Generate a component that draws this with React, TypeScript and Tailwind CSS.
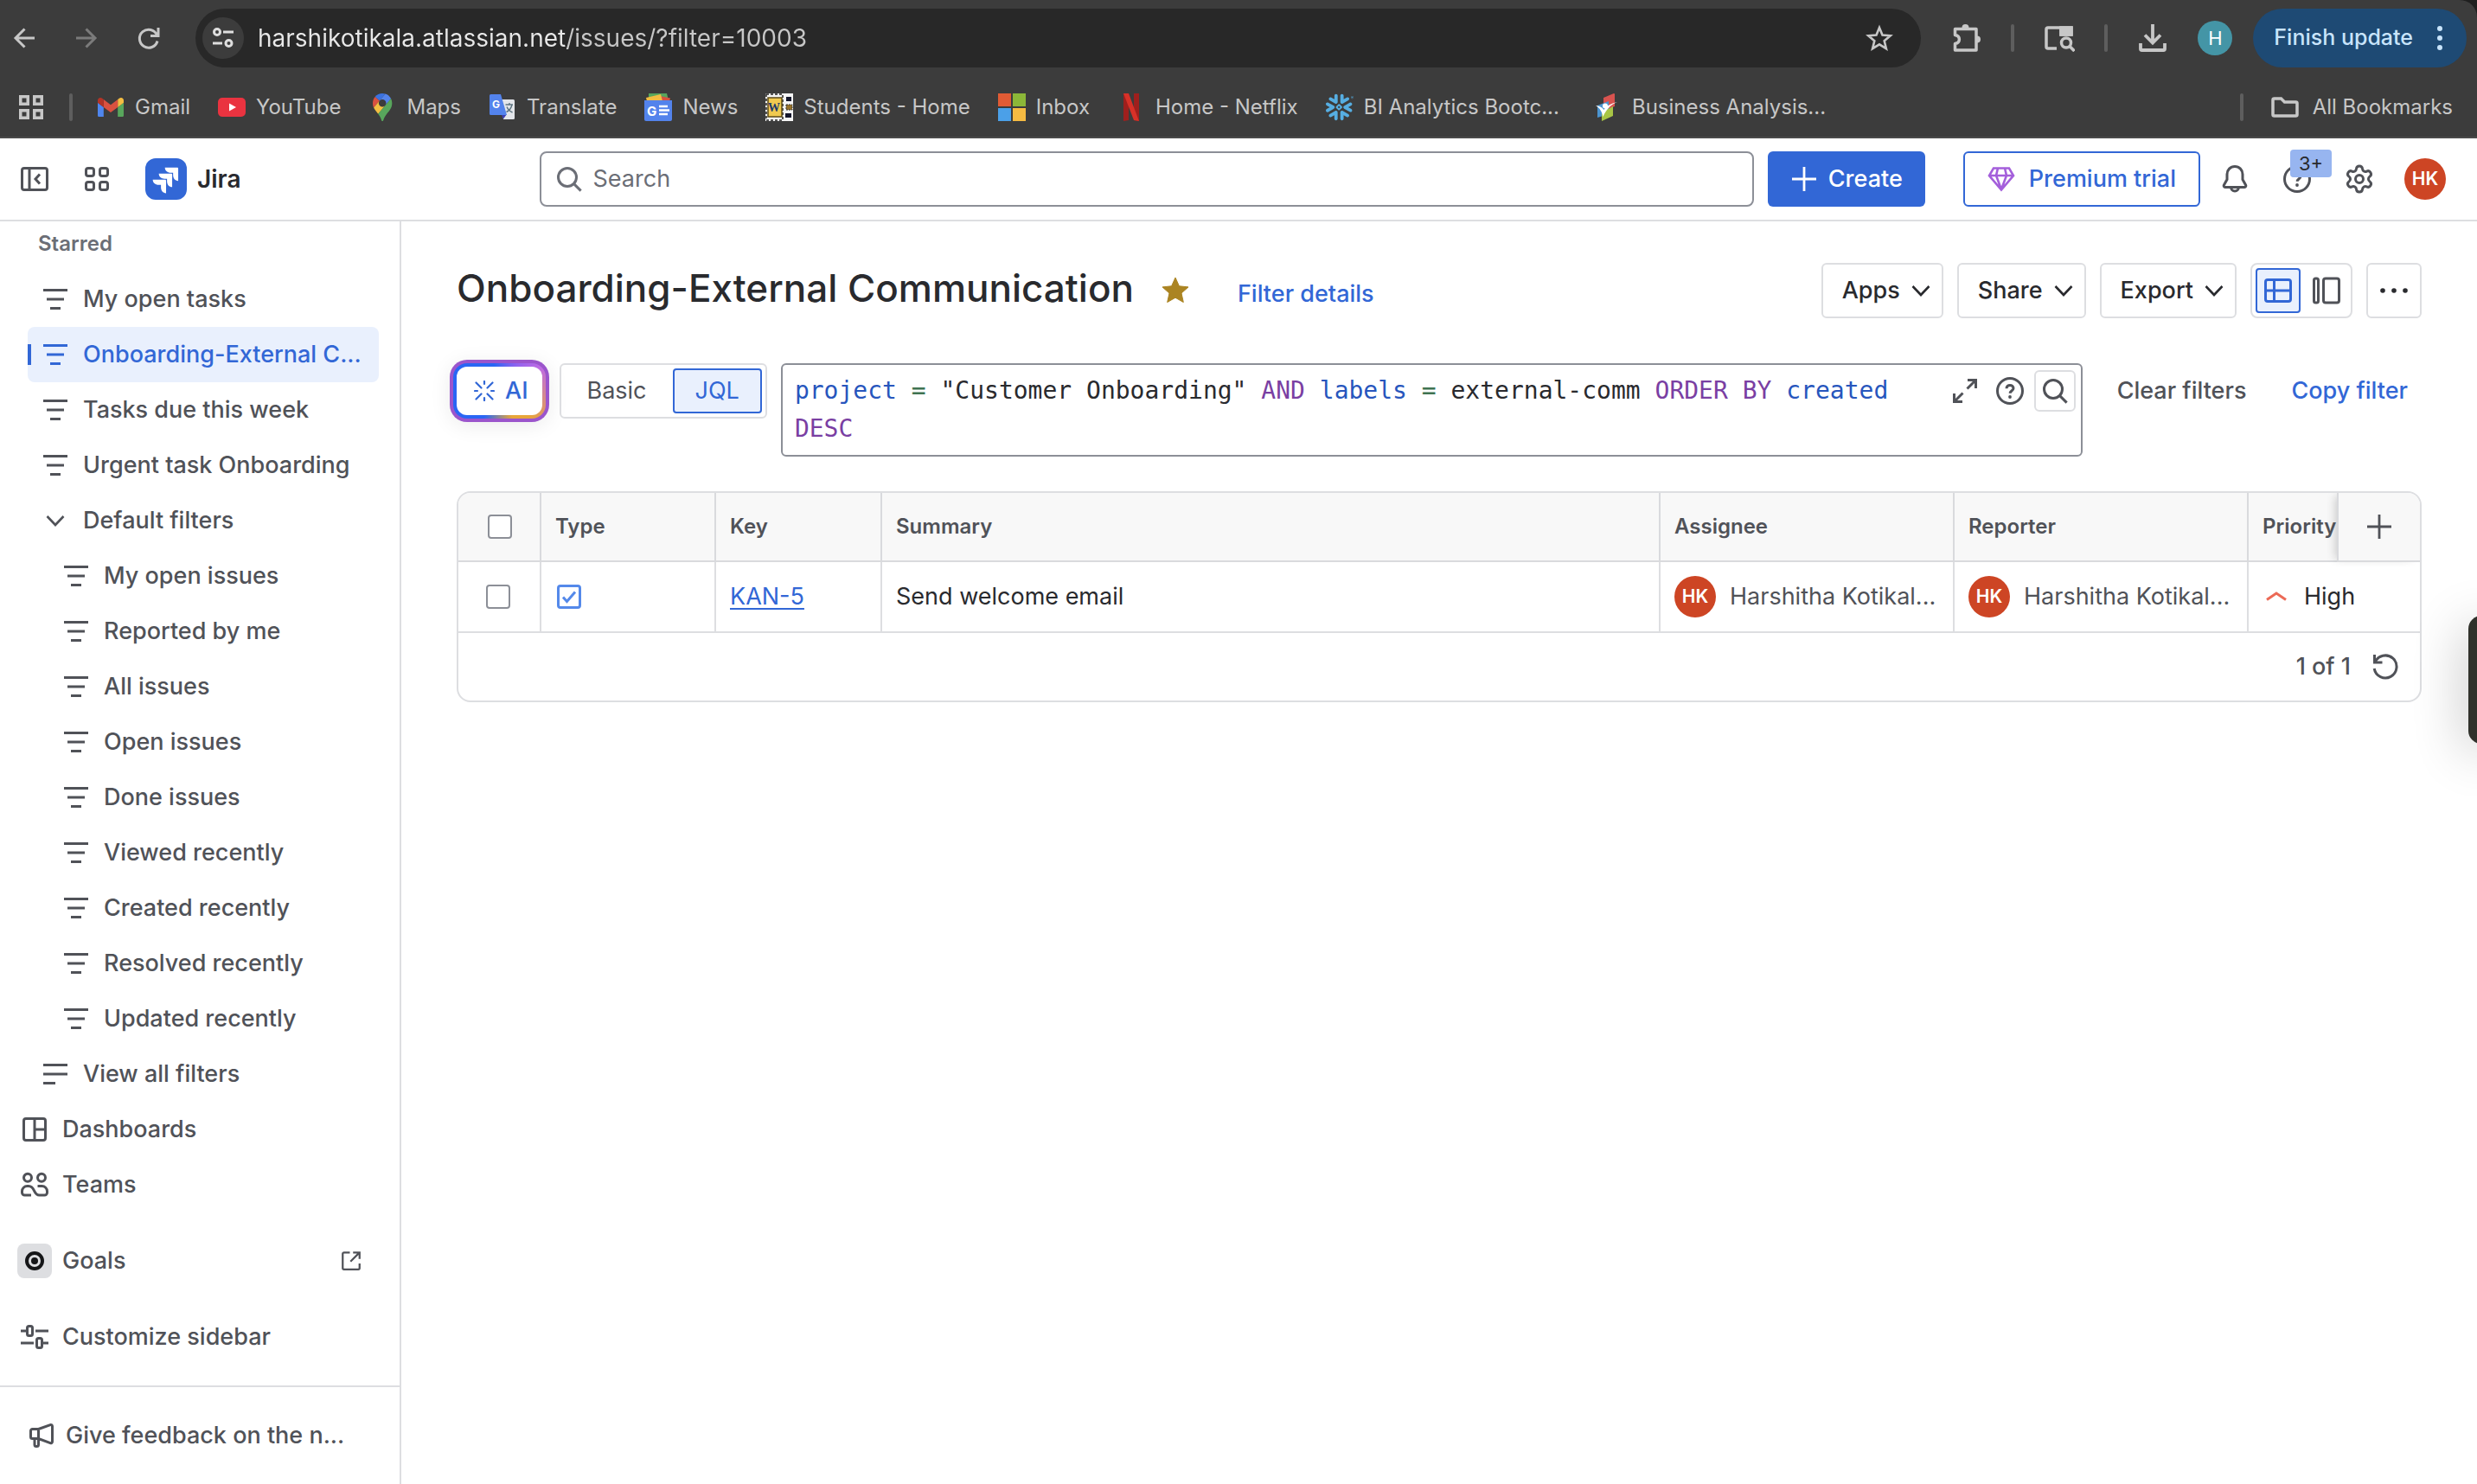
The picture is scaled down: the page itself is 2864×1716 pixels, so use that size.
import React from "react";
import { Settings } from "lucide-react";
import { SiSnowflake } from "react-icons/si";

type Kids = { children: React.ReactNode; className?: string };

/* 16-unit outlined icon, drawn at 32px unless a size class is given */
function Icon({ children, className = "size-8" }: Kids) {
  return (
    <svg viewBox="0 0 16 16" fill="none" stroke="currentColor" strokeWidth="1.5" aria-hidden="true" className={"shrink-0 " + className}>
      {children}
    </svg>
  );
}

const FilterIcon = () => <Icon><path d="M1 2.75h14M3 8h10M5 13.25h6" /></Icon>;
const LinesIcon = () => <Icon><path d="M1 2.75h14M1 8h14M1 13.25h7" /></Icon>;
const ChevronDown = ({ className = "size-8" }: { className?: string }) => (
  <Icon className={className}><path d="m3.25 5.5 4.75 5 4.75-5" strokeWidth="1.3" /></Icon>
);
const SearchIcon = ({ className = "size-8" }: { className?: string }) => (
  <Icon className={className}><circle cx="7" cy="7" r="5.25" /><path d="m10.8 10.8 4 4" /></Icon>
);
const HelpIcon = () => (
  <Icon>
    <circle cx="8" cy="8" r="7.25" />
    <path d="M6 6.6c0-1.2.9-1.9 2-1.9s2 .7 2 1.8c0 1.3-1.9 1.5-1.9 2.9" />
    <circle cx="8" cy="11.5" r=".95" fill="currentColor" stroke="none" />
  </Icon>
);
const PlusIcon = () => <Icon><path d="M8 1v14M1 8h14" strokeWidth="1.4" /></Icon>;

/* ---------- Browser chrome ---------- */

const GmailIcon = () => (
  <svg viewBox="52 42 88 66" className="w-[30px]">
    <path fill="#4f86ee" d="M58 108h14V74L52 59v43c0 3.32 2.69 6 6 6" />
    <path fill="#58a65c" d="M120 108h14c3.32 0 6-2.69 6-6V59l-20 15" />
    <path fill="#f3bd42" d="M120 48v26l20-15v-8c0-7.42-8.47-11.65-14.4-7.2" />
    <path fill="#d95140" d="M72 74V48l24 18 24-18v26L96 92" />
    <path fill="#b33427" d="M52 51v8l20 15V48l-5.6-4.2c-5.94-4.45-14.4-.22-14.4 7.2" />
  </svg>
);
const YouTubeIcon = () => (
  <svg viewBox="0 0 32 22" className="w-8">
    <rect width="32" height="22" rx="5" fill="#ea3340" />
    <path d="m13 6.5 8 4.5-8 4.5z" fill="#fff" />
  </svg>
);
const MapsIcon = () => (
  <svg viewBox="0 0 92.3 132.3" className="h-8">
    <path fill="#3b72e0" d="M60.2 2.2C55.8.8 51 0 46.1 0 32 0 19.3 6.4 10.8 16.5l21.8 18.3L60.2 2.2z" />
    <path fill="#d95140" d="M10.8 16.5C4.1 24.5 0 34.9 0 46.1c0 8.7 1.7 15.7 4.6 22l28-33.3-21.8-18.3z" />
    <path fill="#5383ec" d="M46.2 28.5c9.8 0 17.7 7.9 17.7 17.7 0 4.3-1.6 8.3-4.2 11.4 0 0 13.9-16.6 27.5-32.7-5.6-10.8-15.3-19-27-22.7L32.6 34.8c3.3-3.8 8.1-6.3 13.6-6.3" />
    <path fill="#f3bf42" d="M46.2 63.8c-9.8 0-17.7-7.9-17.7-17.7 0-4.3 1.5-8.3 4.1-11.3l-28 33.3c4.8 10.6 12.8 19.2 21 29.9l34.1-40.5c-3.3 3.9-8.1 6.3-13.5 6.3" />
    <path fill="#58a65c" d="M59.1 109.2c15.4-24.1 33.3-35 33.3-63 0-7.7-1.9-14.9-5.2-21.3L25.6 98c2.6 3.4 5.3 7.3 7.9 11.3 9.4 14.5 6.8 23.1 12.8 23.1s3.4-8.7 12.8-23.2" />
  </svg>
);
const TranslateIcon = () => (
  <svg viewBox="0 0 32 32" className="size-8">
    <path d="M14 7h14.5a1.5 1.5 0 0 1 1.5 1.5v20a1.5 1.5 0 0 1-1.5 1.5H17z" fill="#e4e6ea" />
    <path d="m15 25 6-1-4 5.5z" fill="#3c3fb0" />
    <path d="M2.5 1H14l7 24H2.5A1.5 1.5 0 0 1 1 23.5v-21A1.5 1.5 0 0 1 2.5 1z" fill="#5383ec" />
    <path d="M19.5 13H28M24 11v2M27 13c-.8 4-3.5 7-6.5 8.5M21 15.500c1.2 3 3.500 5 6.500 6.500" stroke="#5d7480" strokeWidth="1.4" fill="none" />
    <text x="4" y="17" fontSize="12" fontWeight="700" fill="#fff" fontFamily="Inter, sans-serif">G</text>
  </svg>
);
const NewsIcon = () => (
  <svg viewBox="0 0 32 32" className="size-8">
    <path d="M5 0h21l2 8H5z" fill="#58a65c" />
    <path d="M18 3l12 2.5-1 4H18z" fill="#d95140" />
    <path d="M2 5l17-4 2 8H3z" fill="#f3bd42" />
    <path d="M0 8h32v22a2 2 0 0 1-2 2H2a2 2 0 0 1-2-2z" fill="#5383ec" />
    <text x="3" y="25.5" fontSize="15" fontWeight="700" fill="#fff" fontFamily="Inter, sans-serif">G</text>
    <path d="M17 15h10M17 19.5h12M17 24h10" stroke="#fff" strokeWidth="2.4" />
  </svg>
);
const StudentsIcon = () => (
  <svg viewBox="0 0 32 32" className="size-8">
    <path d="M0 0h32v32H0z" fill="#f5f5f5" />
    <path d="M1 1h19v30H1z" fill="none" stroke="#222" strokeWidth="1.5" strokeDasharray="3 2" />
    <path d="M3 5h16v22H3z" fill="#f0ca50" stroke="#5b4a17" strokeWidth="1.5" />
    <text x="3" y="21" fontSize="14" fontWeight="900" fill="#1d3a6b" fontFamily="Liberation Serif, serif">W</text>
    <path d="M24 4h6v5h-6zM23 23h7v5h-7z" fill="#15172c" />
    <path d="M24 13h7v6h-7z" fill="#96722b" stroke="#333" strokeDasharray="2 1" />
  </svg>
);
const InboxIcon = () => (
  <svg viewBox="0 0 32 32" className="size-8">
    <path d="M0 0h15v15H0z" fill="#e15b34" /><path d="M17 0h15v15H17z" fill="#8cb738" />
    <path d="M0 17h15v15H0z" fill="#4ba0e8" /><path d="M17 17h15v15H17z" fill="#f6bb42" />
  </svg>
);
const NetflixIcon = () => (
  <svg viewBox="0 0 18 32" className="h-8">
    <path d="M0 0h6v31l-6 1zM12 0h6v32l-6-1z" fill="#9f1f1d" />
    <path d="M0 0h6l12 32-6-1z" fill="#d73128" />
  </svg>
);
const AnalysisIcon = () => (
  <svg viewBox="0 0 32 32" className="size-8">
    <path d="M11 5 23 0q1 0 1 1v14l-13 5z" fill="#d9534f" />
    <path d="M4 14l13-5v15L4 28z" fill="#4b94d0" />
    <path d="M9 22l13-7v11L9 32z" fill="#a8c545" />
    <path d="M2 14c5 3 7 7 8.500 13C14 19 19 13 27 10c-8 2-12 4-15.500 9C9 15.500 6 14.500 2 14z" fill="#fff" />
    <circle cx="13" cy="14.5" r="3" fill="#fff" />
  </svg>
);

const bookmarks: { label: string; icon: React.ReactNode }[] = [
  { label: "Gmail", icon: <GmailIcon /> },
  { label: "YouTube", icon: <YouTubeIcon /> },
  { label: "Maps", icon: <MapsIcon /> },
  { label: "Translate", icon: <TranslateIcon /> },
  { label: "News", icon: <NewsIcon /> },
  { label: "Students - Home", icon: <StudentsIcon /> },
  { label: "Inbox", icon: <InboxIcon /> },
  { label: "Home - Netflix", icon: <NetflixIcon /> },
  { label: "BI Analytics Bootc...", icon: <SiSnowflake className="size-8 text-[#56aee2]" /> },
  { label: "Business Analysis...", icon: <AnalysisIcon /> },
];

const Divider = () => <span className="h-8 w-1 shrink-0 rounded-full bg-[#5e5e5e]" />;

function Browser() {
  return (
    <div className="bg-[#1f1f1f]">
      <header className="h-40 rounded-tr-[20px] border-b-2 border-[#4a4a4a] bg-[#3c3c3c] text-[#c7c7c7]">
        <div className="flex h-[88px] items-center px-3">
          <div className="flex items-center gap-10">
            <button aria-label="Back">
              <svg viewBox="0 0 32 32" className="size-8" fill="none" stroke="currentColor" strokeWidth="3"><path d="M28 16H6M16.5 5.5 6 16l10.5 10.5" /></svg>
            </button>
            <button aria-label="Forward" className="text-[#7b7b7b]">
              <svg viewBox="0 0 32 32" className="size-8" fill="none" stroke="currentColor" strokeWidth="3"><path d="M4 16h22M15.5 5.5 26 16 15.5 26.500" /></svg>
            </button>
            <button aria-label="Reload">
              <svg viewBox="0 0 32 32" className="size-8" fill="none" stroke="currentColor" strokeWidth="3"><path d="M26 19.5A10.500 10.500 0 1 1 25.500 12.500M27 4v9.500H18" /></svg>
            </button>
          </div>
          <div className="ml-[38px] flex h-[68px] flex-1 items-center rounded-full bg-[#282828] pl-2 pr-8">
            <button aria-label="Site information" className="flex size-12 items-center justify-center rounded-full bg-[#3c3c3c]">
              <svg viewBox="0 0 28 28" className="size-7" fill="none" stroke="#dedede" strokeWidth="3"><circle cx="7" cy="7" r="3.5" /><path d="M14 7h12M2 20h11" /><circle cx="20.5" cy="20" r="3.5" /></svg>
            </button>
            <input
              aria-label="Address"
              defaultValue="harshikotikala.atlassian.net/issues/?filter=10003"
              className="ml-4 min-w-0 flex-1 bg-[linear-gradient(90deg,#e8e8e8_358px,#c7c7c7_358px)] bg-clip-text text-[28px] text-transparent caret-white outline-none"
            />
            <button aria-label="Bookmark this page">
              <svg viewBox="0 0 32 32" className="size-8" fill="none" stroke="currentColor" strokeWidth="2.6"><path d="m16 4 3.500 8.500 9.200.7-7 6 2.200 9L16 23.300 8.100 28.200l2.200-9-7-6 9.200-.7z" /></svg>
            </button>
          </div>
          <div className="ml-9 flex items-center gap-[34px]">
            <button aria-label="Extensions">
              <svg viewBox="0 0 34 34" className="size-[34px]" fill="none" stroke="currentColor" strokeWidth="3.5">
                <path d="M3.500 6.500h24.500v24.500H3.500v-7.500c6.500-1 6.500-9 0-10z" strokeLinejoin="round" />
                <path d="M11.500 5a4 4 0 0 1 8 0zM29 14.500a4 4 0 0 1 0 8z" fill="currentColor" stroke="none" />
              </svg>
            </button>
            <Divider />
            <button aria-label="Search tabs">
              <svg viewBox="0 0 36 32" className="h-8 w-9" fill="none" stroke="currentColor" strokeWidth="3.5">
                <path d="M15 28H5a2 2 0 0 1-2-2V6a2 2 0 0 1 2-2h27v8H20V4" /><path d="M20 4h12v8H20z" fill="currentColor" />
                <circle cx="26" cy="21.500" r="5.5" /><path d="m30 25.500 5.500 5.500" />
              </svg>
            </button>
            <Divider />
          </div>
          <button aria-label="Downloads" className="ml-9">
            <svg viewBox="0 0 32 32" className="size-8" fill="none" stroke="currentColor" strokeWidth="3.8"><path d="M16 0v21M7 12.500l9 9 9-9M2 22v6.500a1.500 1.500 0 0 0 1.500 1.500h25a1.500 1.500 0 0 0 1.500-1.500V22" /></svg>
          </button>
          <button aria-label="Profile" className="ml-9 size-10 rounded-full bg-[#4495a6] text-[22px] text-white">H</button>
          <button className="ml-6 flex h-[68px] items-center rounded-full bg-[#1e4a74] pl-6 pr-7 text-[25px] font-medium text-[#c8e4fb]">
            Finish update
            <svg viewBox="0 0 6 28" className="ml-7 h-7 w-[6px]" fill="currentColor"><circle cx="3" cy="3" r="3" /><circle cx="3" cy="14" r="3" /><circle cx="3" cy="25" r="3" /></svg>
          </button>
        </div>
        <nav aria-label="Bookmarks" className="flex h-[70px] items-center pl-[22px] pr-7 pt-0.5 text-2xl">
          <button aria-label="Apps">
            <svg viewBox="0 0 28 28" className="size-7" fill="none" stroke="currentColor" strokeWidth="3.5"><path d="M1.750 1.750h8.500v8.500h-8.500zM17.750 1.750h8.500v8.500h-8.500zM1.750 17.750h8.500v8.500h-8.500zM17.750 17.750h8.500v8.500h-8.500z" /></svg>
          </button>
          <span className="ml-[30px] mr-7 flex"><Divider /></span>
          <ul className="flex items-center gap-8">
            {bookmarks.map((b) => (
              <li key={b.label} className="last:ml-2">
                <a href="#" className="flex items-center gap-3 whitespace-nowrap">
                  <span className="flex size-8 items-center justify-center">{b.icon}</span>
                  {b.label}
                </a>
              </li>
            ))}
          </ul>
          <span className="ml-auto mr-8 flex"><Divider /></span>
          <button className="flex items-center gap-4">
            <svg viewBox="0 0 32 24" className="w-8" fill="none" stroke="currentColor" strokeWidth="3.5"><path d="M2 3.500A1.500 1.500 0 0 1 3.500 2h8l4 4h13A1.500 1.500 0 0 1 30 7.500v13a1.500 1.500 0 0 1-1.500 1.500h-25A1.500 1.500 0 0 1 2 20.500z" /></svg>
            All Bookmarks
          </button>
        </nav>
      </header>
    </div>
  );
}

/* ---------- Jira top bar ---------- */

function Avatar() {
  return (
    <span className="flex size-12 shrink-0 items-center justify-center rounded-full bg-[#cd4524] text-[21px] font-semibold text-white">HK</span>
  );
}

function TopBar() {
  return (
    <div className="flex h-24 items-center border-b-2 border-[#dddee1] pl-6 pr-9 text-[#505258]">
      <button aria-label="Collapse sidebar">
        <Icon><rect x=".75" y="1.75" width="14.5" height="12.5" rx="1.25" /><path d="M5 1.750v12.500M11 5.250 8.500 8 11 10.750" /></Icon>
      </button>
      <button aria-label="Switch apps" className="ml-10">
        <Icon><rect x="1.75" y="1.75" width="4.5" height="4.5" rx="1.25" /><rect x="9.75" y="1.75" width="4.5" height="4.5" rx="1.25" /><rect x="1.75" y="9.75" width="4.5" height="4.5" rx="1.25" /><rect x="9.75" y="9.75" width="4.5" height="4.5" rx="1.25" /></Icon>
      </button>
      <a href="#" className="ml-10 flex items-center gap-3 text-[28px] font-semibold text-[#292a2e]">
        <svg viewBox="0 0 24 24" className="size-12">
          <rect width="24" height="24" rx="6" fill="#3267d6" />
          <path fill="#fff" d="M9.051 15.434H7.734c-1.988 0-3.413-1.218-3.413-3h7.085c.367 0 .605.26.605.63v7.130c-1.772 0-2.960-1.435-2.960-3.434zm3.500-3.543h-1.318c-1.987 0-3.413-1.196-3.413-2.978h7.085c.367 0 .627.239.627.608v7.130c-1.772 0-2.981-1.435-2.981-3.434zm3.520-3.522h-1.317c-1.987 0-3.413-1.217-3.413-3h7.085c.367 0 .605.262.605.610v7.129c-1.771 0-2.960-1.435-2.960-3.434z" />
        </svg>
        Jira
      </a>
      <label className="ml-[345px] flex h-16 flex-1 items-center gap-3 rounded-lg border-2 border-[#8c8f97] px-4 text-[#6b6e76]">
        <SearchIcon />
        <input aria-label="Search" placeholder="Search" className="min-w-0 flex-1 text-[27px] text-[#292a2e] outline-none placeholder:text-[#6b6e76]" />
      </label>
      <button className="ml-4 flex h-16 items-center gap-3 rounded-md bg-[#3267d6] px-[26px] text-[27px] font-medium text-white">
        <PlusIcon />
        Create
      </button>
      <button className="ml-11 flex h-16 items-center gap-4 rounded-md border-2 border-[#3267d6] px-[26px] text-[27px] font-medium text-[#3267d6]">
        <Icon className="size-8 text-[#a45fdb]">
          <path d="M3.500 1.750h9L15 6l-7 8.250L1 6zM1 6h14M6 1.750 5 6l3 8M10 1.750 11 6l-3 8" strokeWidth="1.3" />
        </Icon>
        Premium trial
      </button>
      <button aria-label="Notifications" className="ml-6">
        <Icon><path d="M8 .75c2.600 0 4.500 2 4.500 4.500v3l1.800 3.200c.3.600 0 1.300-.7 1.300H2.400c-.7 0-1-.7-.7-1.300l1.800-3.200v-3C3.500 2.750 5.400.75 8 .75zM5.800 12.750a2.200 2.200 0 0 0 4.400 0" /></Icon>
      </button>
      <button aria-label="Help, 3+ new" className="relative ml-10">
        <HelpIcon />
        <span className="absolute -top-[18px] left-2 flex h-8 w-12 items-center justify-center rounded-sm bg-[#97b5f0] text-[22px] text-[#292a2e]">3+</span>
      </button>
      <button aria-label="Settings" className="ml-[38px]"><Settings className="size-9" strokeWidth={2} /></button>
      <button aria-label="Account" className="ml-[34px]"><Avatar /></button>
    </div>
  );
}

/* ---------- Sidebar ---------- */

function NavItem({ icon, label, level = 0, active = false }: { icon: React.ReactNode; label: string; level?: number; active?: boolean }) {
  const pad = level === 2 ? "pl-10" : level === 1 ? "pl-4" : "pl-3";
  const outer = level === 0 ? "ml-3" : "ml-8";
  const tone = active ? "bg-[#e9f0fd] text-[#3267d6]" : "text-[#505258]";
  return (
    <a href="#" aria-current={active ? "page" : undefined} className={`relative mr-6 flex h-16 items-center gap-4 whitespace-nowrap rounded-lg ${outer} ${pad} ${tone}`}>
      {active && <span className="absolute left-0 h-6 w-1 bg-[#3267d6]" />}
      {icon}
      {label}
    </a>
  );
}

const starred = ["My open tasks", "Onboarding-External C...", "Tasks due this week", "Urgent task Onboarding"];
const defaults = ["My open issues", "Reported by me", "All issues", "Open issues", "Done issues", "Viewed recently", "Created recently", "Resolved recently", "Updated recently"];

function Sidebar() {
  return (
    <aside className="flex w-[464px] shrink-0 flex-col border-r-2 border-[#dddee1] text-[27px] font-medium">
      <nav aria-label="Filters">
        <h2 className="pb-4 pl-11 pt-2.5 text-2xl leading-8 font-semibold text-[#6b6e76]">Starred</h2>
        {starred.map((label, i) => <NavItem key={label} icon={<FilterIcon />} label={label} level={1} active={i === 1} />)}
        <NavItem icon={<ChevronDown />} label="Default filters" level={1} />
        {defaults.map((label) => <NavItem key={label} icon={<FilterIcon />} label={label} level={2} />)}
        <NavItem icon={<LinesIcon />} label="View all filters" level={1} />
        <NavItem icon={<Icon><rect x="1.75" y="1.75" width="12.5" height="12.5" rx="1.25" /><path d="M8 1.750v12.500M8 8h6.250" /></Icon>} label="Dashboards" />
        <NavItem
          icon={<Icon><circle cx="4" cy="3.9" r="2.25" /><circle cx="12" cy="3.9" r="2.25" /><path d="M6 14H2.250a1.500 1.500 0 0 1-1.500-1.500v-.750a3 3 0 0 1 3-3h.750C8.500 8.750 7 14 10.750 14h3a1.500 1.500 0 0 0 1.500-1.500v-.750a3 3 0 0 0-3-3h-2.500" /></Icon>}
          label="Teams"
        />
      </nav>
      <a href="#" className="mr-6 mt-6 flex h-16 items-center gap-3 pl-5 text-[#505258]">
        <span className="flex size-10 items-center justify-center rounded-lg bg-[#dddee1] text-[#151618]">
          <svg viewBox="0 0 22 22" className="size-[22px]"><circle cx="11" cy="11" r="9" fill="none" stroke="currentColor" strokeWidth="4" /><circle cx="11" cy="11" r="4" fill="currentColor" /></svg>
        </span>
        Goals
        <Icon className="ml-auto mr-5 size-6"><path d="M7 1.500H2.500a1 1 0 0 0-1 1v11a1 1 0 0 0 1 1h11a1 1 0 0 0 1-1V10M9.500 1.500h5v5M14.250 1.750 7.500 8.500" /></Icon>
      </a>
      <a href="#" className="mt-6 flex h-16 items-center gap-4 pl-6 text-[#505258]">
        <Icon><rect x="3.75" y="1.75" width="3" height="5.5" rx="1" /><rect x="9.25" y="8.75" width="3" height="5.5" rx="1" /><path d="M0 4.500h3.750M8.500 4.500H16M0 11.500h7.500M12.250 11.500H16" /></Icon>
        Customize sidebar
      </a>
      <div className="mt-auto flex h-[114px] items-center border-t-2 border-[#dddee1] pl-8">
        <a href="#" className="flex items-center gap-3 whitespace-nowrap text-[#505258]">
          <Icon><path d="M6.250 4.250 13.100 1.800a.850.850 0 0 1 1.150.8v8.900a.850.850 0 0 1-1.150.8L6.250 9.750h-3.500a1 1 0 0 1-1-1v-3.500a1 1 0 0 1 1-1zM6.250 4.250v9a1 1 0 0 1-1 1h-.250a1 1 0 0 1-1-1v-3.500" /></Icon>
          Give feedback on the n...
        </a>
      </div>
    </aside>
  );
}

/* ---------- Main ---------- */

function MenuButton({ label }: { label: string }) {
  return (
    <button className="flex h-16 items-center gap-2 rounded-md border-2 border-[#dddee1] pl-[22px] pr-2 text-[27px] font-medium text-[#292a2e]">
      {label}
      <ChevronDown />
    </button>
  );
}

function TitleRow() {
  return (
    <div className="flex items-center">
      <h1 className="whitespace-nowrap pb-1.5 text-[44px] leading-[52px] font-medium text-[#292a2e]">Onboarding-External Communication</h1>
      <button aria-label="Unstar filter" className="ml-8">
        <svg viewBox="0 0 32 32" className="size-8" fill="#ab8422"><path d="m16 1 4.400 9.800 10.600 1.100-8 7.100 2.300 10.500L16 24.200 6.700 29.500 9 19l-8-7.100 10.600-1.100z" stroke="#ab8422" strokeLinejoin="round" /></svg>
      </button>
      <a href="#" className="ml-14 pt-2 text-[27px] font-medium text-[#3267d6]">Filter details</a>
      <div className="ml-auto flex gap-4">
        <MenuButton label="Apps" />
        <MenuButton label="Share" />
        <MenuButton label="Export" />
        <div className="flex h-16 items-center gap-1.5 rounded-lg border-2 border-[#dddee1] px-1">
          <button aria-label="List view" aria-pressed="true" className="flex size-[52px] items-center justify-center rounded-sm border-2 border-[#3267d6] bg-[#e9f0fd] text-[#3267d6]">
            <Icon><rect x=".75" y="1.75" width="14.5" height="12.5" rx="1.25" /><path d="M5.750 1.750v12.500M.75 8h14.500" /></Icon>
          </button>
          <button aria-label="Detail view" className="flex size-12 items-center justify-center text-[#505258]">
            <Icon><rect x=".75" y="1" width="2.5" height="14" rx="1" /><rect x="6.25" y="1" width="9" height="14" rx="1.25" /></Icon>
          </button>
        </div>
        <button aria-label="More actions" className="flex size-16 items-center justify-center rounded-md border-2 border-[#dddee1] text-[#292a2e]">
          <svg viewBox="0 0 32 6" className="w-8" fill="currentColor"><circle cx="3" cy="3" r="2.800" /><circle cx="16" cy="3" r="2.800" /><circle cx="29" cy="3" r="2.800" /></svg>
        </button>
      </div>
    </div>
  );
}

const Field = ({ children }: Kids) => <span className="text-[#2756bd]">{children}</span>;
const Op = ({ children }: Kids) => <span className="text-[#3f7351]">{children}</span>;
const Keyword = ({ children }: Kids) => <span className="text-[#7a3fa3]">{children}</span>;

function QueryRow() {
  return (
    <div className="mt-[52px] flex items-start text-[27px]">
      <button className="-ml-2 -mt-1 rounded-[20px] bg-[#9b55cc] p-1 font-medium text-[#3267d6] shadow-[0_4px_24px_rgba(0,0,0,0.08)]">
        <span className="block rounded-2xl bg-[conic-gradient(from_60deg,#bf6be4,#e8a63a_20%,#e8a63a_26%,#2966f4_42%,#2966f4_80%,#8a63f0_92%,#bf6be4)] p-1">
          <span className="flex h-14 items-center gap-3 rounded-xl bg-white pl-5 pr-4">
            <svg viewBox="0 0 24 24" className="size-6" fill="none" stroke="currentColor" strokeWidth="2.2" strokeLinecap="round">
              <path d="M12 1v3M12 20v3M1 12h3M20 12h3M2.500 2.500l6 6M15.500 15.500l6 6M21.500 2.500l-6 6M8.500 15.500l-6 6" />
            </svg>
            AI
          </span>
        </span>
      </button>
      <div className="ml-3 flex h-16 items-center rounded-md border-2 border-[#dddee1] pr-1">
        <button className="px-[30px] text-[#505258]">Basic</button>
        <button aria-pressed="true" className="h-[52px] rounded-sm border-2 border-[#3267d6] bg-[#e9f0fd] px-6 text-[#3267d6]">JQL</button>
      </div>
      <div className="ml-4 flex min-h-[108px] flex-1 items-start rounded-md border-2 border-[#8c8f97] pb-2 pl-3.5 pr-1.5 pt-1.5">
        <div
          role="textbox"
          aria-label="JQL query"
          contentEditable
          suppressContentEditableWarning
          className="flex-1 pt-0.5 font-['DejaVu_Sans_Mono',monospace] text-[28px] leading-[44px] text-[#292a2e] outline-none"
        >
          <Field>project</Field> <Op>=</Op> "Customer Onboarding" <Keyword>AND</Keyword> <Field>labels</Field> <Op>=</Op> external-comm <Keyword>ORDER BY</Keyword> <Field>created</Field> <Keyword>DESC</Keyword>
        </div>
        <div className="ml-12 flex items-center text-[#505258]">
          <button aria-label="Expand editor"><Icon><path d="M9.500 1.750h4.750V6.500M14 2 9.250 6.750M6.500 14.250H1.750V9.500M2 14l4.750-4.750" /></Icon></button>
          <button aria-label="Syntax help" className="ml-5"><HelpIcon /></button>
          <button aria-label="Run query" className="ml-3 flex size-12 items-center justify-center rounded-md border-2 border-[#dddee1]"><SearchIcon /></button>
        </div>
      </div>
      <button className="ml-10 flex h-16 items-center font-medium text-[#505258]">Clear filters</button>
      <button className="ml-[52px] mr-4 flex h-16 items-center font-medium text-[#3267d6]">Copy filter</button>
    </div>
  );
}

const th = "h-20 border-b-2 border-r-2 border-[#d9dadd] px-4 text-left font-semibold";
const td = "h-[82px] border-b-2 border-r-2 border-[#dddee1] px-4";
const box = "block size-7 appearance-none rounded-[4px] border-2 border-[#8c8f97] bg-white";

const Person = () => (
  <span className="flex items-center gap-4 whitespace-nowrap text-[#505258]"><Avatar />Harshitha Kotikal...</span>
);

function IssueTable() {
  return (
    <section className="mt-10 overflow-hidden rounded-2xl border-2 border-[#dddee1]">
      <table className="w-full table-fixed border-separate border-spacing-0">
        <colgroup>
          <col className="w-24" /><col className="w-[202px]" /><col className="w-48" /><col />
          <col className="w-[340px]" /><col className="w-[340px]" /><col className="w-[102px]" /><col className="w-24" />
        </colgroup>
        <thead className="bg-[#f8f8f8] text-2xl text-[#505258]">
          <tr>
            <th className={th + " pl-[34px]"}><input type="checkbox" aria-label="Select all" className={box} /></th>
            <th className={th}>Type</th>
            <th className={th}>Key</th>
            <th className={th}>Summary</th>
            <th className={th}>Assignee</th>
            <th className={th}>Reporter</th>
            <th className="h-20 overflow-hidden border-b-2 border-[#d9dadd] pl-4 text-left font-semibold">Priority</th>
            <th className="h-20 border-b-2 border-l-2 border-[#d9dadd] shadow-[-6px_0_10px_-4px_rgba(0,0,0,0.18)]">
              <button aria-label="Add column" className="flex w-full items-center justify-center"><PlusIcon /></button>
            </th>
          </tr>
        </thead>
        <tbody className="text-[27px] text-[#292a2e]">
          <tr>
            <td className={td + " pl-8"}><input type="checkbox" aria-label="Select KAN-5" className={box} /></td>
            <td className={td}>
              <svg viewBox="0 0 28 28" className="ml-0.5 size-7" fill="none" stroke="#5489ea" strokeWidth="3"><rect x="1.5" y="1.5" width="25" height="25" rx="2.5" /><path d="m7 14.500 4.500 5L21 8.500" /></svg>
            </td>
            <td className={td}><a href="#" className="text-[#3267d6] underline underline-offset-4">KAN-5</a></td>
            <td className={td}>Send welcome email</td>
            <td className={td}><Person /></td>
            <td className={td}><Person /></td>
            <td colSpan={2} className="h-[82px] border-b-2 border-[#dddee1] px-4">
              <span className="flex items-center gap-4">
                <Icon className="size-8 text-[#ec6a56]"><path d="M2.500 9.750 8 6l5.500 3.750" /></Icon>
                High
              </span>
            </td>
          </tr>
        </tbody>
      </table>
      <div className="flex h-[78px] items-center justify-end gap-6 pr-6 text-[27px] font-medium text-[#505258]">
        1 of 1
        <button aria-label="Refresh"><Icon><path d="M1.750 1v4.500h4.500M2 5.500A6.500 6.500 0 1 1 1.600 9" /></Icon></button>
      </div>
    </section>
  );
}

export default function App() {
  return (
    <div className="relative flex min-h-screen flex-col overflow-hidden bg-white font-['Inter',sans-serif]">
      <Browser />
      <TopBar />
      <div className="flex flex-1">
        <Sidebar />
        <main className="min-w-0 flex-1 px-16 pt-12">
          <TitleRow />
          <QueryRow />
          <IssueTable />
        </main>
      </div>
      <button aria-label="Open side panel" className="absolute -right-5 top-[712px] h-[148px] w-[30px] rounded-2xl bg-[#30312b] shadow-[0_10px_60px_rgba(0,0,0,0.3)]" />
    </div>
  );
}
